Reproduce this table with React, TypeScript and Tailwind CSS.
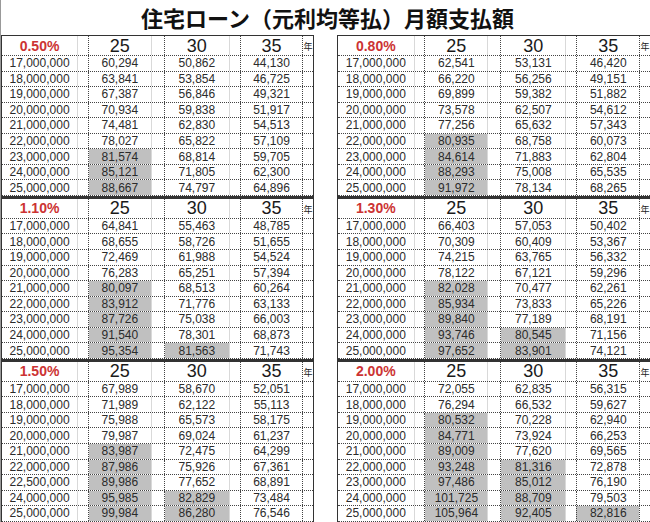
const AMOUNTS = [
  "17,000,000",
  "18,000,000",
  "19,000,000",
  "20,000,000",
  "21,000,000",
  "22,000,000",
  "23,000,000",
  "24,000,000",
  "25,000,000",
]

type Block = { rate: string; labels: string[]; rows: number[][] }

const blocks: Block[][] = [
  [
    {
      rate: "0.50%",
      labels: AMOUNTS,
      rows: [
        [60294, 50862, 44130],
        [63841, 53854, 46725],
        [67387, 56846, 49321],
        [70934, 59838, 51917],
        [74481, 62830, 54513],
        [78027, 65822, 57109],
        [81574, 68814, 59705],
        [85121, 71805, 62300],
        [88667, 74797, 64896],
      ],
    },
    {
      rate: "0.80%",
      labels: AMOUNTS,
      rows: [
        [62541, 53131, 46420],
        [66220, 56256, 49151],
        [69899, 59382, 51882],
        [73578, 62507, 54612],
        [77256, 65632, 57343],
        [80935, 68758, 60073],
        [84614, 71883, 62804],
        [88293, 75008, 65535],
        [91972, 78134, 68265],
      ],
    },
  ],
  [
    {
      rate: "1.10%",
      labels: AMOUNTS,
      rows: [
        [64841, 55463, 48785],
        [68655, 58726, 51655],
        [72469, 61988, 54524],
        [76283, 65251, 57394],
        [80097, 68513, 60264],
        [83912, 71776, 63133],
        [87726, 75038, 66003],
        [91540, 78301, 68873],
        [95354, 81563, 71743],
      ],
    },
    {
      rate: "1.30%",
      labels: AMOUNTS,
      rows: [
        [66403, 57053, 50402],
        [70309, 60409, 53367],
        [74215, 63765, 56332],
        [78122, 67121, 59296],
        [82028, 70477, 62261],
        [85934, 73833, 65226],
        [89840, 77189, 68191],
        [93746, 80545, 71156],
        [97652, 83901, 74121],
      ],
    },
  ],
  [
    {
      rate: "1.50%",
      labels: [
        "17,000,000",
        "18,000,000",
        "19,000,000",
        "20,000,000",
        "21,000,000",
        "22,000,000",
        "22,500,000",
        "24,000,000",
        "25,000,000",
      ],
      rows: [
        [67989, 58670, 52051],
        [71989, 62122, 55113],
        [75988, 65573, 58175],
        [79987, 69024, 61237],
        [83987, 72475, 64299],
        [87986, 75926, 67361],
        [89986, 77652, 68891],
        [95985, 82829, 73484],
        [99984, 86280, 76546],
      ],
    },
    {
      rate: "2.00%",
      labels: AMOUNTS,
      rows: [
        [72055, 62835, 56315],
        [76294, 66532, 59627],
        [80532, 70228, 62940],
        [84771, 73924, 66253],
        [89009, 77620, 69565],
        [93248, 81316, 72878],
        [97486, 85012, 76190],
        [101725, 88709, 79503],
        [105964, 92405, 82816],
      ],
    },
  ],
]

const fmt = (n: number) => n.toLocaleString("en-US")

// cells at or above 80,000 yen a month are shaded
const shade = (n: number) => (n >= 80000 ? "bg-[#c0c0c0]" : "")

function HeaderRow({ rate }: { rate: string }) {
  return (
    <div className="flex h-[20px] border-b border-dotted border-[#444]">
      <div className="flex w-[77px] items-center justify-center text-[14px] font-bold leading-none text-[#cc3333]">
        {rate}
      </div>
      <div className="w-[11px] border-l border-[#d9d9d9]" />
      {["25", "30"].map((y, i) => (
        <div key={y} className="flex border-l border-dotted border-[#444]">
          <div
            className={`flex items-center justify-center text-[18px] leading-none text-[#1a1a1a] ${
              i === 0 ? "w-[62px]" : "w-[64px]"
            }`}
          >
            {y}
          </div>
          <div className={`border-l border-[#d9d9d9] ${i === 0 ? "w-[13px]" : "w-[11px]"}`} />
        </div>
      ))}
      <div className="flex w-[64px] items-center justify-center border-l border-dotted border-[#444] text-[18px] leading-none text-[#1a1a1a]">
        35
      </div>
      <div className="flex w-[11px] items-center justify-center border-l border-dotted border-[#444] pt-[4px] text-[9px] leading-none text-[#222]">
        年
      </div>
    </div>
  )
}

function DataRow({ label, values }: { label: string; values: number[] }) {
  return (
    <div className="flex h-[15.55px] border-b border-dotted border-[#444] text-[12px] leading-none text-[#2b2b2b]">
      <div className="flex w-[77px] items-center justify-center">{label}</div>
      <div className="w-[11px] border-l border-[#d9d9d9]" />
      <div className="flex border-l border-dotted border-[#444]">
        <div className={`flex w-[62px] items-center justify-center ${shade(values[0])}`}>{fmt(values[0])}</div>
        <div className="w-[13px] border-l border-[#d9d9d9]" />
      </div>
      <div className="flex border-l border-dotted border-[#444]">
        <div className={`flex w-[64px] items-center justify-center ${shade(values[1])}`}>{fmt(values[1])}</div>
        <div className="w-[11px] border-l border-[#d9d9d9]" />
      </div>
      <div
        className={`flex w-[64px] items-center justify-center border-l border-dotted border-[#444] ${shade(values[2])}`}
      >
        {fmt(values[2])}
      </div>
      <div className="w-[11px] border-l border-dotted border-[#444]" />
    </div>
  )
}

function RateBlock({ block, last, right }: { block: Block; last: boolean; right: boolean }) {
  return (
    <div
      className={`border-x border-[#333] ${right ? "w-[314px]" : "w-[313px]"} ${
        last ? "" : "border-b-[3px] border-b-double"
      }`}
    >
      <HeaderRow rate={block.rate} />
      {block.rows.map((r, i) => (
        <DataRow key={i} label={block.labels[i]} values={r} />
      ))}
    </div>
  )
}

export default function App() {
  return (
    <div
      className="h-[522px] w-[650px] overflow-hidden border-l border-[#999] bg-white"
      style={{ fontFamily: '"Liberation Sans", Arial, "Noto Sans CJK JP", sans-serif' }}
    >
      <div
        className="flex h-[35px] items-center justify-center pl-[4px] text-[22px] font-bold text-[#111]"
        style={{ fontFamily: '"Noto Sans CJK JP", sans-serif' }}
      >
        住宅ローン（元利均等払）月額支払額
      </div>
      <div className="flex w-[651px] flex-col">
        {blocks.map((pair, i) => (
          <div key={i} className="flex">
            <div className={i === 0 ? "border-t border-[#333]" : ""}>
              <RateBlock block={pair[0]} last={i === blocks.length - 1} right={false} />
            </div>
            <div className="w-[23px]" />
            <div className={i === 0 ? "border-t border-[#333]" : ""}>
              <RateBlock block={pair[1]} last={i === blocks.length - 1} right />
            </div>
          </div>
        ))}
      </div>
    </div>
  )
}
